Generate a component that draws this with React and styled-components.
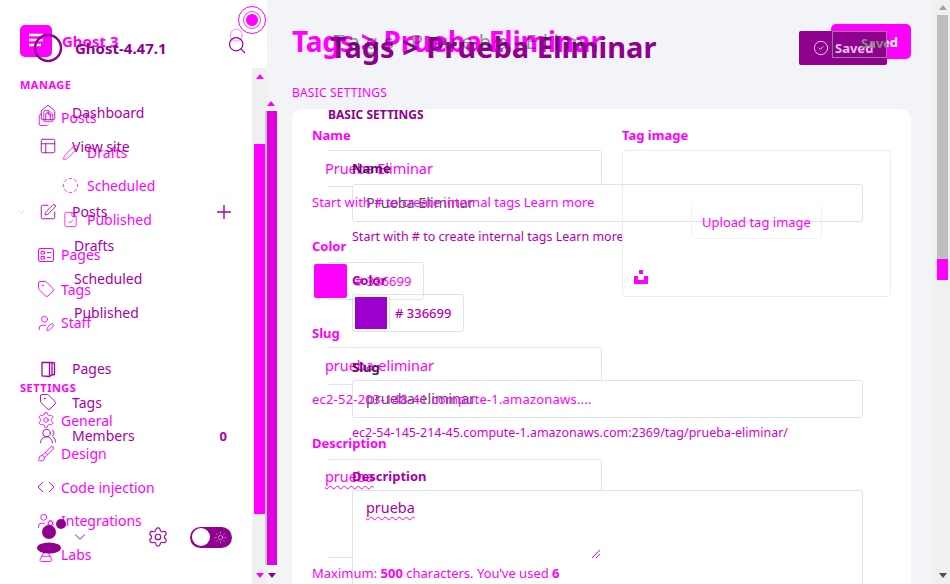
import React from 'react';
import styled, { createGlobalStyle } from 'styled-components';
import {
  Brush,
  ChevronDown,
  CircleCheck,
  CircleDashed,
  FileCheck,
  Files,
  FlaskConical,
  House,
  Pencil,
  PanelsTopLeft,
  Plus,
  Search,
  Settings,
  SquarePen,
  Sun,
  Tag,
  UserCog,
  UserPen,
  UsersRound,
} from 'lucide-react';

const MAGENTA = '#ff00ff';
const PURPLE = '#a600a6';
const DEEP = '#8f008f';

const GlobalStyle = createGlobalStyle`
  html, body {
    margin: 0;
    padding: 0;
    overflow: hidden;
  }
  body {
    font-family: "Noto Sans", "Open Sans", sans-serif;
  }
`;

const Stage = styled.div`
  position: relative;
  display: flex;
  width: 950px;
  height: 584px;
  overflow: hidden;
  background: #f3f4f8;
`;

/* second layer, lies over the whole first page */
const TopLayer = styled.div`
  position: absolute;
  inset: 0;
  z-index: 2;
  display: flex;
`;

const FocusMark = styled.svg`
  position: absolute;
  left: 238px;
  top: 6px;
  z-index: 4;
`;

const Sidebar = styled.aside`
  flex: 0 0 267px;
  display: flex;
  flex-direction: column;
  background: #fff;
`;

const SidebarHead = styled.header`
  display: flex;
  align-items: flex-start;
  height: 68px;
  box-sizing: border-box;
  padding: 25px 0 0 20px;
  color: ${MAGENTA};
`;

const LogoSquare = styled.svg`
  flex: none;
`;

const BrandName = styled.span`
  margin-left: 10px;
  font-size: 15px;
  font-weight: 700;
  line-height: 32px;
  color: ${MAGENTA};
`;

const HeadSearch = styled.span`
  display: flex;
  margin: 2px 0 0 auto;
  padding-right: 21px;
  opacity: 0.55;
`;

const SidebarBody = styled.div`
  flex: 1;
  display: flex;
  min-height: 0;
`;

const Nav = styled.nav`
  flex: 1;
  padding-top: 9px;
`;

const NavGroup = styled.div`
  padding-left: 20px;
  margin-top: ${p => p.$top || 0}px;
  margin-bottom: 8px;
  font-size: 11px;
  font-weight: 700;
  line-height: 16px;
  letter-spacing: 0.5px;
  color: ${MAGENTA};
`;

const NavItem = styled.div`
  display: flex;
  align-items: center;
  gap: ${p => (p.$sub ? 8 : 6)}px;
  height: 33.5px;
  margin-top: ${p => p.$top || 0}px;
  padding-left: ${p => (p.$sub ? 62 : 37)}px;
  font-size: 14px;
  color: ${MAGENTA};
`;

const Track = styled.div`
  flex: 0 0 ${p => p.$w}px;
  display: flex;
  flex-direction: column;
  align-items: ${p => (p.$flush ? 'flex-start' : 'center')};
  background: ${p => p.$bg || 'transparent'};
`;

const ArrowUp = styled.i`
  flex: none;
  width: 0;
  height: 0;
  margin: ${p => p.$top}px ${p => (p.$inset ? '0 0 ' + p.$inset + 'px' : 'auto')};
  margin-bottom: 3px;
  border: 4px solid transparent;
  border-top: 0;
  border-bottom: 5px solid ${p => p.$color};
`;

const ArrowDown = styled.i`
  flex: none;
  width: 0;
  height: 0;
  margin: auto auto 6px;
  border: 4px solid transparent;
  border-bottom: 0;
  border-top: 5px solid ${p => p.$color};
`;

const Thumb = styled.div`
  flex: none;
  box-sizing: border-box;
  width: ${p => p.$w}px;
  height: ${p => p.$h}px;
  margin-top: ${p => p.$top || 0}px;
  background: ${p => p.$color};
  border-left: ${p => (p.$edge ? '2px solid #c6c6c6' : '0')};
`;

const Main = styled.main`
  flex: 1;
  min-width: 0;
  padding: 24px 24px 0 25px;
`;

const PageHead = styled.div`
  display: flex;
  justify-content: space-between;
  align-items: flex-start;
  height: 52px;
`;

const PageTitle = styled.h1`
  margin: 0;
  font-size: 28px;
  font-weight: 700;
  line-height: 34px;
  letter-spacing: -0.2px;
  white-space: nowrap;
  color: ${MAGENTA};
`;

const SaveButton = styled.div`
  display: flex;
  align-items: center;
  justify-content: flex-end;
  box-sizing: border-box;
  width: 80px;
  height: 35px;
  padding-right: 13px;
  border-radius: 5px;
  background: ${MAGENTA};
  font-size: 13px;
  font-weight: 700;
  color: #fff;
`;

const SectionTitle = styled.div`
  height: 33px;
  padding-top: 9px;
  box-sizing: border-box;
  font-size: 12px;
  line-height: 16px;
  letter-spacing: 0.2px;
  color: ${MAGENTA};
`;

const Card = styled.section`
  display: grid;
  grid-template-columns: 290px 269px;
  column-gap: 20px;
  align-items: start;
  height: 500px;
  padding: 18px 20px 0;
  box-sizing: border-box;
  border-radius: 10px 10px 0 0;
  background: #fff;
`;

const Field = styled.div`
  display: flex;
  flex-direction: column;
`;

const Label = styled.label`
  display: block;
  margin-top: ${p => p.$top || 0}px;
  font-size: 13px;
  font-weight: 700;
  line-height: 16px;
  color: ${MAGENTA};
`;

/* left edge of these boxes is missing in the picture, only the run past 16px shows */
const Frame = styled.div`
  box-sizing: border-box;
  height: ${p => p.$h}px;
  margin-top: ${p => p.$top}px;
  padding: 0 13px;
  border-right: 1px solid #dde5ec;
  border-radius: 0 4px 4px 0;
  background:
    linear-gradient(#dde5ec, #dde5ec) 16px 0 / 100% 1px no-repeat,
    linear-gradient(#dde5ec, #dde5ec) 16px 100% / 100% 1px no-repeat;
  font-size: 14.4px;
  line-height: ${p => p.$line || 38}px;
  color: ${MAGENTA};
`;

const SpellWord = styled.span`
  text-decoration: underline wavy ${MAGENTA} 1px;
  text-underline-offset: 3px;
`;

const ResizeMark = styled.svg`
  position: relative;
  z-index: 3;
  display: block;
  margin: 55px -12px 0 auto;
`;

const Help = styled.div`
  position: relative;
  z-index: 3;
  margin-top: ${p => p.$top || 7}px;
  font-size: 13px;
  line-height: 16px;
  letter-spacing: ${p => p.$spread || 0}px;
  white-space: nowrap;
  color: ${MAGENTA};
  b {
    font-weight: 700;
  }
`;

const ColorFrame = styled(Frame)`
  display: flex;
  align-items: center;
  gap: 8px;
  width: 112px;
  padding: 0 0 0 2px;
  font-size: 13px;
`;

const Swatch = styled.span`
  flex: none;
  width: 33px;
  height: 34px;
  background: ${MAGENTA};
  border-radius: 2px;
`;

const TagBox = styled.div`
  position: relative;
  z-index: 3;
  display: flex;
  flex-direction: column;
  align-items: center;
  box-sizing: border-box;
  height: 147px;
  margin-top: 7px;
  padding-top: 52px;
  border: 1px solid #e6edf3;
  border-radius: 4px;
`;

const UploadButton = styled.div`
  box-sizing: border-box;
  width: 131px;
  height: 36px;
  border: 1px solid #eef1f5;
  border-top-color: transparent;
  border-radius: 5px;
  font-size: 13px;
  line-height: 36px;
  text-align: center;
  color: ${MAGENTA};
`;

const TagGlyph = styled.svg`
  align-self: flex-start;
  margin: 31px 0 0 11px;
`;

/* ---- top layer ---- */

const TopSidebar = styled.div`
  flex: 0 0 265px;
  display: flex;
  flex-direction: column;
  height: 584px;
`;

const TopHead = styled.header`
  display: flex;
  align-items: flex-start;
  height: 96px;
  padding: 33px 0 0 33px;
  box-sizing: border-box;
`;

const BuildName = styled.span`
  margin-left: 12px;
  font-size: 15px;
  font-weight: 700;
  line-height: 30px;
  color: ${DEEP};
`;

const TopSearch = styled.span`
  display: flex;
  margin: 2px 0 0 auto;
  padding-right: 18px;
  color: ${PURPLE};
`;

const TopItem = styled.div`
  display: flex;
  align-items: center;
  height: 33.5px;
  padding-left: ${p => (p.$sub ? 74 : 39)}px;
  margin-top: ${p => p.$top || 0}px;
  padding-right: 38px;
  gap: 15px;
  font-size: 14px;
  color: ${PURPLE};
`;

const Toggler = styled.span`
  display: flex;
  margin-left: -24px;
  margin-right: -3px;
  color: #cfcfcf;
`;

const ItemEnd = styled.span`
  margin-left: auto;
  margin-right: ${p => p.$shift || 0}px;
  display: flex;
  font-size: 13px;
  font-weight: 700;
`;

const TopFoot = styled.footer`
  display: flex;
  align-items: center;
  margin-top: auto;
  margin-bottom: 26px;
  padding-left: 37px;
  height: 42px;
  color: ${PURPLE};
`;

const UserMark = styled.svg`
  flex: none;
  overflow: visible;
`;

const FootMenu = styled.span`
  display: flex;
  margin-left: 10px;
  color: ${PURPLE};
`;

const FootGear = styled.span`
  display: flex;
  margin-left: 58px;
`;

const ThemeSwitch = styled.span`
  display: flex;
  align-items: center;
  justify-content: space-between;
  width: 42px;
  height: 21px;
  box-sizing: border-box;
  margin-left: 21px;
  padding: 0 5px 0 2px;
  border-radius: 11px;
  background: ${DEEP};
  color: #f4b6f4;
  &::before {
    content: '';
    width: 18px;
    height: 18px;
    border-radius: 50%;
    background: #fff;
  }
`;

const TopMain = styled.div`
  flex: 1;
  min-width: 0;
  padding: 0 63px 0 50px;
`;

const TopPageHead = styled.div`
  display: flex;
  justify-content: space-between;
  align-items: flex-start;
  height: 107px;
  padding-top: 29px;
  box-sizing: border-box;
`;

const TopTitle = styled.h1`
  position: relative;
  margin: 0 0 0 2px;
  font-size: 29px;
  font-weight: 700;
  line-height: 36px;
  white-space: nowrap;
  color: ${DEEP};
`;

/* thin dark copy of the title that shows through it */
const TitleEcho = styled.span`
  position: absolute;
  left: 3px;
  top: 1px;
  font-size: 20px;
  font-weight: 400;
  line-height: 24px;
  letter-spacing: 6px;
  white-space: nowrap;
  color: #2a102a;
  opacity: 0.45;
`;

const TopSave = styled.div`
  position: relative;
  display: flex;
  align-items: center;
  gap: 6px;
  flex: none;
  box-sizing: border-box;
  width: 88px;
  height: 34px;
  margin-top: 2px;
  padding-left: 14px;
  border-radius: 2px;
  background: ${DEEP};
  font-size: 13px;
  font-weight: 700;
  color: #eec0ee;
`;

const OverlapEdge = styled.span`
  position: absolute;
  left: 33px;
  top: 0;
  right: 0;
  bottom: 7px;
  overflow: hidden;
  padding-left: 28px;
  border: 1px solid #878787;
  font-size: 13px;
  line-height: 22px;
  color: #8a8a8a;
`;

const TopSection = styled.div`
  font-size: 12px;
  font-weight: 700;
  line-height: 16px;
  color: ${DEEP};
`;

const TopFields = styled.div`
  padding-left: 24px;
  width: 511px;
`;

const TopLabel = styled.label`
  display: block;
  margin-top: ${p => p.$top}px;
  font-size: 13px;
  font-weight: 700;
  line-height: 16px;
  color: ${p => (p.$dark ? '#5a105a' : PURPLE)};
`;

const TopInput = styled.div`
  box-sizing: border-box;
  height: ${p => p.$h || 38}px;
  margin-top: ${p => p.$top}px;
  padding: 0 13px;
  border: 1px solid #dfe3e8;
  border-radius: 3px;
  background: #fff;
  font-size: 14.4px;
  line-height: ${p => p.$line || 36}px;
  color: ${p => p.$ink || '#5c4a5c'};
`;

const TopHelp = styled.div`
  margin-top: 7px;
  font-size: 12.5px;
  line-height: 16px;
  white-space: nowrap;
  color: ${p => p.$ink || '#b400b4'};
`;

const TopColor = styled.div`
  display: flex;
  align-items: center;
  box-sizing: border-box;
  width: 112px;
  height: 38px;
  margin-top: 6px;
  padding-left: 2px;
  border: 1px solid #dfe3e8;
  border-radius: 3px;
  font-size: 13px;
  font-weight: 500;
  color: #b400b4;
`;

const TopSwatch = styled.span`
  flex: none;
  width: 32px;
  height: 32px;
  margin-right: 8px;
  background: #9c00cc;
  box-shadow: 2px 0 0 #fff, 3px 0 0 #dfe3e8;
`;

const sideIcon = { size: 18, strokeWidth: 1.2 };
const subIcon = { size: 17, strokeWidth: 1.1 };

function ChevronPair(props) {
  return (
    <svg width={props.size} height={props.size} viewBox="0 0 18 18" fill="none" stroke="currentColor" strokeWidth="1">
      <path d="M6 4 1 9l5 5M12 4l5 5-5 5" />
    </svg>
  );
}

function PageBoard(props) {
  return (
    <svg width={props.size} height={props.size} viewBox="0 0 18 18" fill="none" stroke="currentColor" strokeWidth="1">
      <rect x="1.5" y="2.5" width="15" height="13" rx="1.5" />
      <path d="M4 5.5h3.5V8H4zM4 10.5h3.5V13H4zM10 6.5h4M10 11.5h4" />
    </svg>
  );
}

function PageBook(props) {
  return (
    <svg width={props.size} height={props.size} viewBox="0 0 18 18" fill="none" stroke="currentColor" strokeWidth="1.3">
      <path d="M3 2.5h10v12l-2.5 2-7.5-.5zM13 2.5l2.5.5v11.5l-2.5.5M10.5 3v13.5" />
    </svg>
  );
}

const manageItems = [
  { label: 'Posts', icon: Files },
  { label: 'Drafts', icon: Pencil, sub: true, top: 1 },
  { label: 'Scheduled', icon: CircleDashed, sub: true },
  { label: 'Published', icon: FileCheck, sub: true },
  { label: 'Pages', icon: PageBoard, top: 2 },
  { label: 'Tags', icon: Tag, top: 1 },
  { label: 'Staff', icon: UserPen },
];

const settingItems = [
  { label: 'General', icon: Settings },
  { label: 'Design', icon: Brush },
  { label: 'Code injection', icon: ChevronPair },
  { label: 'Integrations', icon: UserCog },
  { label: 'Labs', icon: FlaskConical },
];

const Item = ({ label, icon: Icon, sub, top }) => (
  <NavItem $sub={sub} $top={top}>
    <Icon {...(sub ? subIcon : sideIcon)} />
    {label}
  </NavItem>
);

const TopRow = ({ icon: Icon, label, sub, top, end }) => (
  <TopItem $sub={sub} $top={top}>
    {Icon && <Icon {...sideIcon} />}
    {label}
    {end && <ItemEnd>{end}</ItemEnd>}
  </TopItem>
);

const BackPage = () => (
  <>
    <Sidebar>
      <SidebarHead>
        <LogoSquare width="32" height="32" viewBox="0 0 32 32">
          <rect width="32" height="32" rx="5" fill={MAGENTA} />
          <path d="M9 10h14M9 15h14M9 20h12" stroke="#fff" strokeWidth="2.4" />
        </LogoSquare>
        <BrandName>Ghost 3</BrandName>
        <HeadSearch>
          <Search size={18} strokeWidth={1.1} />
        </HeadSearch>
      </SidebarHead>
      <SidebarBody>
        <Nav>
          <NavGroup>MANAGE</NavGroup>
          {manageItems.map(item => (
            <Item key={item.label} {...item} />
          ))}
          <NavGroup $top={40}>SETTINGS</NavGroup>
          {settingItems.map(item => (
            <Item key={item.label} {...item} />
          ))}
        </Nav>
        <Track $w={15} $bg="#f0f0f0">
          <ArrowUp $top={6} $color={MAGENTA} />
          <Thumb $w={11} $h={370} $top={62} $color={MAGENTA} />
          <ArrowDown $color={MAGENTA} />
        </Track>
      </SidebarBody>
    </Sidebar>
    <Main>
      <PageHead>
        <PageTitle>Tags &gt; Prueba Eliminar</PageTitle>
        <SaveButton>Saved</SaveButton>
      </PageHead>
      <SectionTitle>BASIC SETTINGS</SectionTitle>
      <Card>
        <Field>
          <Label>Name</Label>
          <Frame $h={37} $top={7}>Prueba Eliminar</Frame>
          <Help>Start with # to create internal tags Learn more</Help>
          <Label $top={28}>Color</Label>
          <ColorFrame $h={38} $top={8}>
            <Swatch />
            # 336699
          </ColorFrame>
          <Label $top={25}>Slug</Label>
          <Frame $h={38} $top={6}>prueba-eliminar</Frame>
          <Help $top={6} $spread={0.2}>ec2-52-203-148-41.compute-1.amazonaws....</Help>
          <Label $top={28}>Description</Label>
          <Frame $h={99} $top={8} $line={36}>
            <SpellWord>prueba</SpellWord>
            <ResizeMark width="8" height="8" viewBox="0 0 8 8" stroke={MAGENTA} strokeWidth="1">
              <path d="M0 8 8 0M4 8l4-4" />
            </ResizeMark>
          </Frame>
          <Help>
            Maximum: <b>500</b> characters. You’ve used <b>6</b>
          </Help>
        </Field>
        <Field>
          <Label>Tag image</Label>
          <TagBox>
            <UploadButton>Upload tag image</UploadButton>
            <TagGlyph width="14" height="14" viewBox="0 0 14 14" fill={MAGENTA}>
              <rect x="5" y="0" width="4" height="4" />
              <path d="M0 6h4v4h6V6h4v8H0z" />
            </TagGlyph>
          </TagBox>
        </Field>
      </Card>
    </Main>
    <Track $w={15} $bg="#f0f0f0">
      <ArrowUp $top={5} $color="#a3a3a3" />
      <Thumb $w={11} $h={244} $top={2} $color="#bfbfbf" />
      <Thumb $w={11} $h={21} $color={MAGENTA} />
      <ArrowDown $color="#505050" />
    </Track>
  </>
);

const FrontPage = () => (
  <TopLayer>
    <TopSidebar>
      <TopHead>
        <svg width="30" height="30" viewBox="0 0 30 30" fill="none">
          <circle cx="15" cy="15" r="13" stroke={DEEP} strokeWidth="2.4" />
        </svg>
        <BuildName>Ghost-4.47.1</BuildName>
        <TopSearch>
          <Search size={20} strokeWidth={1.5} />
        </TopSearch>
      </TopHead>
      <TopRow icon={House} label="Dashboard" />
      <TopRow icon={PanelsTopLeft} label="View site" />
      <TopItem $top={32}>
        <Toggler>
          <ChevronDown size={12} strokeWidth={1.2} />
        </Toggler>
        <SquarePen {...sideIcon} />
        Posts
        <ItemEnd $shift={-8}>
          <Plus size={22} strokeWidth={1.5} />
        </ItemEnd>
      </TopItem>
      <TopRow label="Drafts" sub />
      <TopRow label="Scheduled" sub />
      <TopRow label="Published" sub />
      <TopRow icon={PageBook} label="Pages" top={23} />
      <TopRow icon={Tag} label="Tags" />
      <TopRow icon={UsersRound} label="Members" end="0" />
      <TopFoot>
        <UserMark width="24" height="36" viewBox="0 0 24 36" fill={DEEP}>
          <circle cx="12" cy="13" r="7" />
          <ellipse cx="12" cy="29" rx="12" ry="5.5" />
          <circle cx="24" cy="5" r="5" />
        </UserMark>
        <FootMenu>
          <ChevronDown size={18} strokeWidth={1.3} />
        </FootMenu>
        <FootGear>
          <Settings size={22} strokeWidth={1.3} />
        </FootGear>
        <ThemeSwitch>
          <Sun size={13} strokeWidth={1.2} />
        </ThemeSwitch>
      </TopFoot>
    </TopSidebar>
    <Track $w={13} $flush>
      <ArrowUp $top={101} $inset={2} $color={MAGENTA} />
      <Thumb $w={12} $h={454} $top={2} $edge $color="#e000e0" />
      <ArrowDown $color={DEEP} />
    </Track>
    <TopMain>
      <TopPageHead>
        <TopTitle>
          <TitleEcho>Tags Prueba Elim</TitleEcho>
          Tags &gt; Prueba Eliminar
        </TopTitle>
        <TopSave>
          <CircleCheck size={16} strokeWidth={1.2} color="#fff" />
          Saved
          <OverlapEdge>Saved</OverlapEdge>
        </TopSave>
      </TopPageHead>
      <TopSection>BASIC SETTINGS</TopSection>
      <TopFields>
        <TopLabel $top={37} $dark>Name</TopLabel>
        <TopInput $top={8}>Prueba Eliminar</TopInput>
        <TopHelp>Start with # to create internal tags Learn more</TopHelp>
        <TopLabel $top={27}>Color</TopLabel>
        <TopColor>
          <TopSwatch />
          # 336699
        </TopColor>
        <TopLabel $top={27} $dark>Slug</TopLabel>
        <TopInput $top={5}>prueba-eliminar</TopInput>
        <TopHelp $ink="#d000d0">ec2-54-145-214-45.compute-1.amazonaws.com:2369/tag/prueba-eliminar/</TopHelp>
        <TopLabel $top={27}>Description</TopLabel>
        <TopInput $top={6} $h={120} $line={34} $ink={PURPLE}>
          <SpellWord>prueba</SpellWord>
        </TopInput>
      </TopFields>
    </TopMain>
  </TopLayer>
);

const App = () => (
  <Stage>
    <GlobalStyle />
    <BackPage />
    <FrontPage />
    <FocusMark width="28" height="28" viewBox="0 0 28 28" fill="none">
      <circle cx="14" cy="14" r="13.5" stroke={MAGENTA} strokeWidth="1" />
      <circle cx="14" cy="14" r="6" fill={MAGENTA} />
      <circle cx="14" cy="14" r="8.5" stroke={MAGENTA} strokeWidth="0.8" />
    </FocusMark>
  </Stage>
);

export default App;
